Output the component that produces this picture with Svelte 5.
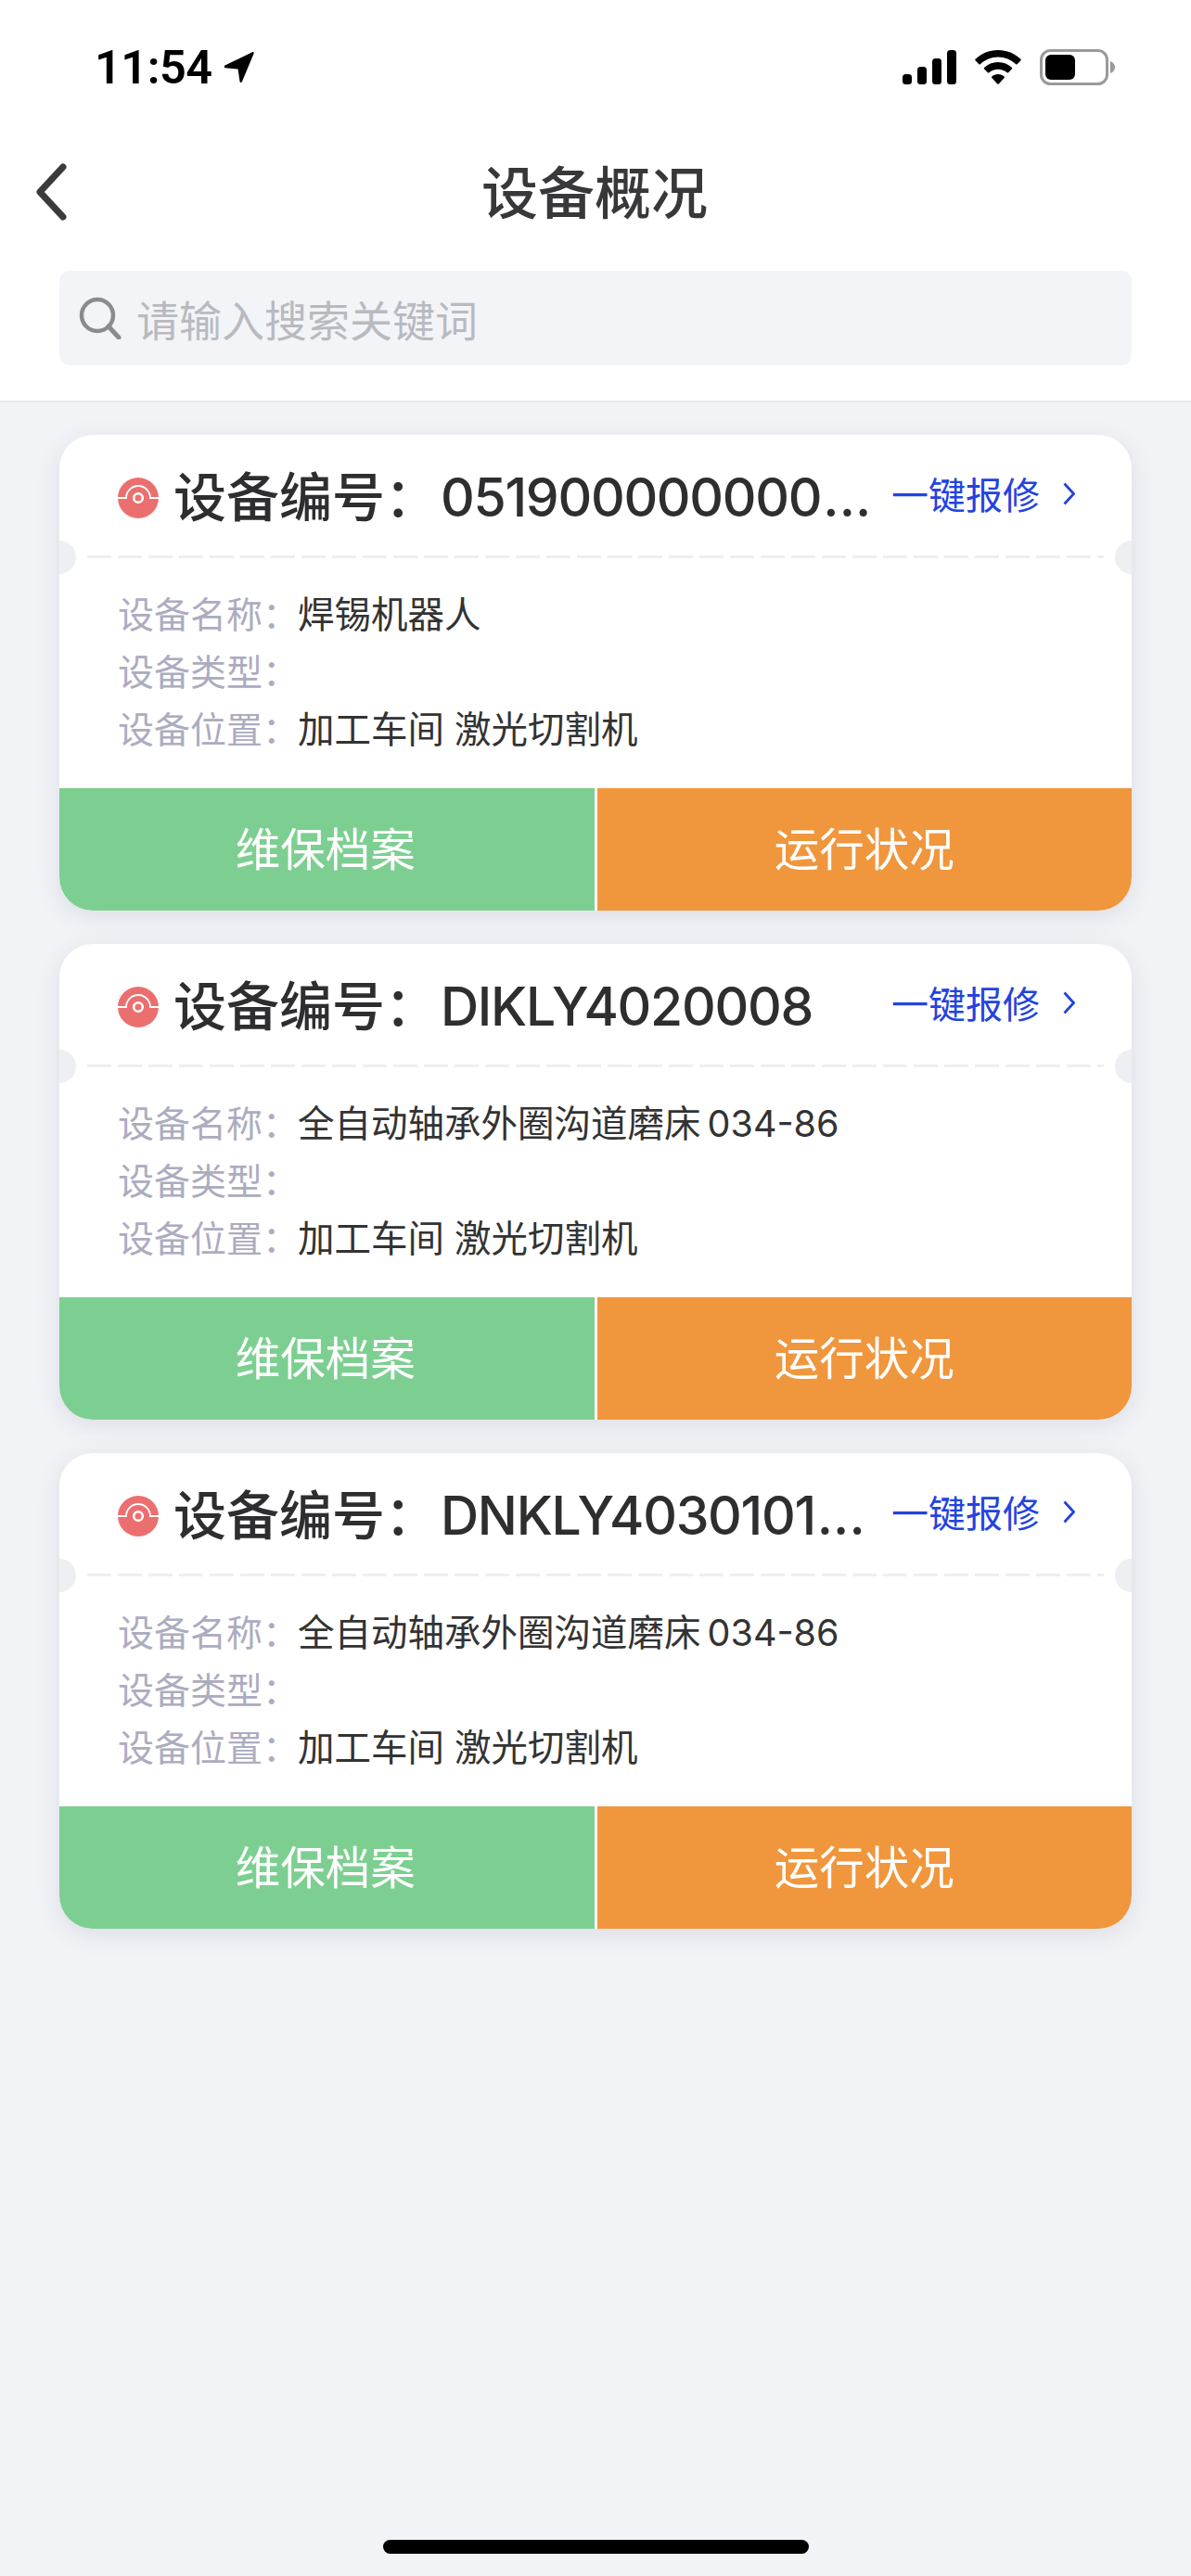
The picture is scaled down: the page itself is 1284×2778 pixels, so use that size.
<script>
  const cards = [
    { no: '051900000000', more: true, name: '焊锡机器人', model: '' },
    { no: 'DIKLY4020008', more: false, name: '全自动轴承外圈沟道磨床', model: '034-86' },
    { no: 'DNKLY4030101', more: true, name: '全自动轴承外圈沟道磨床', model: '034-86' }
  ];
</script>

<div class="page">
  <header class="header">
    <div class="status">
      <div class="time-wrap">
        <span class="time">11:54</span>
        <svg class="loc" width="34" height="35" viewBox="0 0 34 35"><path d="M1.500 15.500 31 1.200c1-.5 2 .5 1.600 1.500L20 33c-.5 1.300-2.300 1.100-2.500-.2L15.500 19.600 2 18.200c-1.400-.2-1.700-2-.5-2.700z" fill="#000"/></svg>
      </div>
      <div class="status-icons">
        <svg width="58" height="37" viewBox="0 0 58 37" fill="#000">
          <rect x="0" y="26" width="10" height="11" rx="3.500"/>
          <rect x="16" y="18" width="10" height="19" rx="3.500"/>
          <rect x="32" y="9" width="10" height="28" rx="3.500"/>
          <rect x="48" y="0" width="10" height="37" rx="3.500"/>
        </svg>
        <svg width="50" height="37" viewBox="0 0 50 37" fill="#000">
          <path d="M25 0c9.500 0 18 3.700 24.500 9.800.4.400.4 1 0 1.400l-3.900 4c-.4.400-1 .4-1.400 0C39 10.400 32.300 7.500 25 7.500S11 10.400 5.800 15.200c-.4.400-1 .4-1.400 0l-3.900-4c-.4-.4-.4-1 0-1.400C7 3.700 15.500 0 25 0z"/>
          <path d="M25 13c5.800 0 11 2.200 15 5.900.4.400.4 1 0 1.400l-3.900 4c-.4.400-1 .4-1.400 0-2.600-2.200-6-3.600-9.700-3.600s-7.100 1.400-9.700 3.600c-.4.400-1 .4-1.400 0l-3.900-4c-.4-.4-.4-1 0-1.400C14 15.200 19.200 13 25 13z"/>
          <path d="M25 26c2.600 0 5 .9 6.700 2.500.4.400.4 1 0 1.400l-6 6.600c-.4.400-1 .4-1.400 0l-6-6.600c-.4-.4-.4-1 0-1.400C20 26.900 22.400 26 25 26z"/>
        </svg>
        <svg width="81" height="39" viewBox="0 0 81 39">
          <rect x="1.500" y="1.500" width="71" height="36" rx="10" fill="none" stroke="#9a9a9a" stroke-width="3"/>
          <rect x="6" y="6" width="32" height="27" rx="6" fill="#000"/>
          <path d="M76 13c3 1 5 3.500 5 6.500s-2 5.500-5 6.500z" fill="#9a9a9a"/>
        </svg>
      </div>
    </div>
    <div class="nav">
      <svg class="back" width="38" height="62" viewBox="0 0 38 62"><path d="M32 4 7 31l25 27" fill="none" stroke="#3a3a3c" stroke-width="7" stroke-linecap="round" stroke-linejoin="round"/></svg>
      <h1>设备概况</h1>
    </div>
    <div class="search">
      <svg width="46" height="46" viewBox="0 0 46 46"><circle cx="20" cy="20" r="17" fill="none" stroke="#8b8b8f" stroke-width="4.500"/><path d="M32 32l11 12" stroke="#8b8b8f" stroke-width="5" stroke-linecap="round"/></svg>
      <span>请输入搜索关键词</span>
    </div>
  </header>

  <main class="list">
    {#each cards as card}
      <section class="card">
        <div class="head">
          <svg class="dot" width="44" height="44" viewBox="0 0 44 44">
            <circle cx="22" cy="22" r="22" fill="#ec6f6f"/>
            <path d="M0 22h9a13 13 0 0 1 26 0h9" fill="none" stroke="#fff" stroke-width="1.800"/>
            <circle cx="22" cy="22" r="4.800" fill="none" stroke="#fff" stroke-width="2.600"/>
          </svg>
          <div class="title">设备编号：<span class="no">{card.no}{#if card.more}<span class="more">...</span>{/if}</span></div>
          <div class="repair">
            <span>一键报修</span>
            <svg width="13" height="25" viewBox="0 0 13 25"><path d="M1.500 1.500 11.500 12.500 1.500 23.500" fill="none" stroke="#2343e0" stroke-width="2.800"/></svg>
          </div>
        </div>
        <div class="divider">
          <i class="notch left"></i>
          <i class="dash"></i>
          <i class="notch right"></i>
        </div>
        <div class="body">
          <div class="row"><span class="label">设备名称：</span><span class="value">{card.model ? card.name + ' ' : card.name}{#if card.model}<span class="model">{card.model}</span>{/if}</span></div>
          <div class="row"><span class="label">设备类型：</span><span class="value"></span></div>
          <div class="row"><span class="label">设备位置：</span><span class="value">加工车间 激光切割机</span></div>
        </div>
        <div class="foot">
          <div class="btn green">维保档案</div>
          <div class="btn orange">运行状况</div>
        </div>
      </section>
    {/each}
  </main>

  <div class="home"></div>
</div>

<style>
  :global(body) {
    margin: 0;
    background: #f2f3f7;
  }
  .page {
    width: 1284px;
    height: 2778px;
    display: flex;
    flex-direction: column;
    background: #f2f3f7;
    font-family: Inter, "Noto Sans CJK SC", sans-serif;
    color: #333;
  }
  .header {
    background: #fff;
    height: 432px;
    border-bottom: 2px solid #e9e9ec;
    box-sizing: content-box;
    flex: none;
  }
  .status {
    height: 132px;
    display: flex;
    justify-content: space-between;
    align-items: flex-start;
    padding: 53px 82px 0 102px;
    box-sizing: border-box;
  }
  .time-wrap {
    display: flex;
    align-items: center;
    gap: 12px;
    height: 39px;
  }
  .time {
    font-size: 50.500px;
    font-weight: 600;
    color: #000;
    line-height: 39px;
    letter-spacing: -0.500px;
    font-family: Roboto, Inter, sans-serif;
  }
  .status-icons {
    display: flex;
    align-items: center;
    gap: 20px;
    height: 39px;
  }
  .nav {
    height: 150px;
    position: relative;
    display: flex;
    align-items: center;
    justify-content: center;
    padding: 0 2px 6px 0;
    box-sizing: border-box;
  }
  .nav h1 {
    margin: 0;
    font-size: 61px;
    font-weight: 500;
    color: #38383a;
  }
  .back {
    position: absolute;
    left: 36px;
    top: 44px;
  }
  .search {
    margin: 10px 64px 0;
    height: 102px;
    background: #f3f4f8;
    border-radius: 11px;
    display: flex;
    align-items: center;
    gap: 16px;
    padding-left: 21px;
    font-size: 46px;
    color: #b9bac0;
  }
  .list {
    flex: 1;
    display: flex;
    flex-direction: column;
    gap: 36px;
    padding: 35px 64px 0;
  }
  .card {
    height: 513px;
    background: #fff;
    border-radius: 36px;
    box-shadow: 0 6px 26px rgba(70, 75, 100, 0.12);
    display: flex;
    flex-direction: column;
    overflow: hidden;
  }
  .head {
    height: 130px;
    flex: none;
    display: flex;
    align-items: center;
    padding: 0 61px 4px 63px;
    box-sizing: border-box;
  }
  .dot {
    flex: none;
    margin-top: 10px;
    margin-right: 16px;
  }
  .title {
    flex: 1;
    min-width: 0;
    font-size: 57px;
    font-weight: 500;
    color: #2e2e30;
    white-space: nowrap;
  }
  .no {
    margin-left: 3px;
    letter-spacing: -1.300px;
  }
  .more {
    margin-left: 2px;
    letter-spacing: 0;
  }
  .repair {
    flex: none;
    display: flex;
    align-items: center;
    gap: 25px;
    font-size: 40px;
    color: #2343e0;
  }
  .divider {
    height: 3px;
    flex: none;
    position: relative;
    padding: 0 30px;
  }
  .dash {
    display: block;
    height: 3px;
    background: repeating-linear-gradient(90deg, #efeff2 0 26px, transparent 26px 33px);
  }
  .notch {
    position: absolute;
    top: -16.500px;
    width: 36px;
    height: 36px;
    border-radius: 50%;
    background: #eeeff3;
  }
  .notch.left {
    left: -18px;
  }
  .notch.right {
    right: -18px;
  }
  .body {
    flex: 1;
    padding: 30px 63px 0;
  }
  .row {
    height: 62px;
    display: flex;
    align-items: center;
    font-size: 39px;
    line-height: 62px;
  }
  .label {
    width: 194px;
    flex: none;
    color: #acacc0;
    white-space: nowrap;
  }
  .value {
    color: #333;
    font-size: 39.500px;
    white-space: pre;
  }
  .model {
    margin-left: -4px;
  }
  .foot {
    height: 132px;
    flex: none;
    display: flex;
    justify-content: space-between;
  }
  .btn {
    width: calc(50% - 1.500px);
    flex: none;
    display: flex;
    align-items: center;
    justify-content: center;
    color: #fff;
    font-size: 48.500px;
    padding-bottom: 6px;
    box-sizing: border-box;
  }
  .green {
    background: #7dcf91;
    padding-right: 3px;
  }
  .orange {
    background: #f0963c;
  }
  .home {
    flex: none;
    width: 459px;
    height: 15px;
    margin: 0 auto 24px;
    border-radius: 8px;
    background: #000;
  }
</style>
